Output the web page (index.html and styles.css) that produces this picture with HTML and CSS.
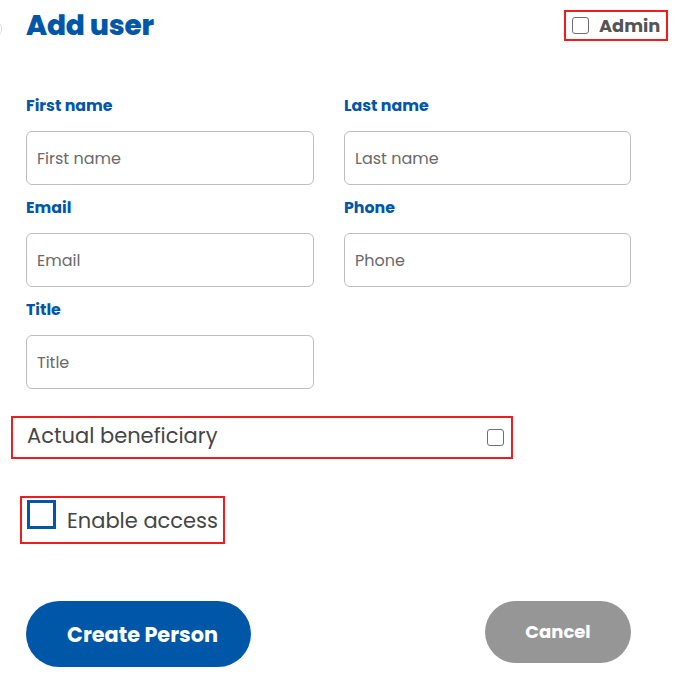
FILE: index.html
```html
<!DOCTYPE html>
<html>
<head>
<meta charset="utf-8">
<link rel="stylesheet" href="styles.css">
</head>
<body>
<div class="page">
  <span class="edge"></span>
  <header class="head">
    <h1 class="title">Add user</h1>
    <label class="admin">
      <span class="cb cb-small"></span>
      <span class="admin-text">Admin</span>
    </label>
  </header>
  <div class="grid">
    <div class="field">
      <div class="label">First name</div>
      <div class="input">First name</div>
    </div>
    <div class="field">
      <div class="label">Last name</div>
      <div class="input">Last name</div>
    </div>
    <div class="field">
      <div class="label">Email</div>
      <div class="input">Email</div>
    </div>
    <div class="field">
      <div class="label">Phone</div>
      <div class="input">Phone</div>
    </div>
    <div class="field">
      <div class="label">Title</div>
      <div class="input">Title</div>
    </div>
  </div>
  <div class="benef">
    <span class="benef-text">Actual beneficiary</span>
    <span class="cb cb-small"></span>
  </div>
  <div class="access">
    <span class="cb-big"></span>
    <span class="access-text">Enable access</span>
  </div>
  <div class="actions">
    <button class="btn btn-primary">Create Person</button>
    <button class="btn btn-cancel">Cancel</button>
  </div>
</div>
</body>
</html>
```
FILE: styles.css
```css
* { box-sizing: border-box; }
html, body { margin: 0; padding: 0; background: #fff; }
body { font-family: "Poppins", "Inter", "Open Sans", sans-serif; color: #444; }
.page { position: relative; width: 675px; height: 682px; overflow: hidden; }
.edge { position: absolute; left: -4px; top: 22px; width: 6px; height: 14px; border-right: 1px solid #ddd; border-radius: 0 6px 6px 0; }
.head { display: flex; justify-content: space-between; align-items: flex-start; padding: 10px 7px 0 26px; height: 95px; }
.title { margin: 0; font-size: 28px; line-height: 32px; font-weight: 800; color: #0057a8; letter-spacing: -0.2px; }
.admin { display: flex; align-items: center; gap: 10px; border: 2px solid #ee1c1c; height: 31px; width: 104px; padding: 0 5px 0 6px; }
.admin-text { font-size: 17.8px; font-weight: 700; color: #555; }
.cb { display: inline-block; border: 1.5px solid #6f6f6f; border-radius: 3px; background: #fff; flex: none; }
.cb-small { width: 17px; height: 17px; }
.grid { display: grid; grid-template-columns: 288px 287px; column-gap: 30px; row-gap: 12px; padding-left: 26px; }
.field { display: flex; flex-direction: column; gap: 14px; }
.label { font-size: 15.8px; line-height: 22px; font-weight: 700; color: #0057a8; }
.input { height: 54px; border: 1px solid #bdbdbd; border-radius: 6px; padding: 0 10px; display: flex; align-items: center; font-size: 16px; color: #6a6a6a; }
.benef { display: flex; align-items: center; justify-content: space-between; margin: 27px 0 0 11px; width: 502px; height: 43px; border: 2px solid #ee1c1c; padding: 0 7px 0 14px; }
.benef-text { font-size: 21px; color: #454545; margin-top: -4px; }
.access { display: inline-flex; align-items: center; gap: 11px; margin: 37px 0 0 20px; height: 48px; border: 2px solid #ee1c1c; padding: 0 5px 0 5px; }
.cb-big { display: inline-block; width: 29px; height: 29px; border: 3px solid #0057a8; margin-top: -12px; flex: none; }
.access-text { font-size: 21px; color: #454545; }
.actions { display: flex; justify-content: space-between; align-items: flex-start; padding: 57px 44px 0 26px; }
.btn { border: none; border-radius: 34px; color: #fff; font-family: inherit; font-weight: 700; }
.btn-primary { width: 225px; height: 66px; background: #0057a8; font-size: 20.8px; padding: 0 0 0 8px; }
.btn-cancel { width: 146px; height: 62px; background: #969696; font-size: 18px; padding: 0 0 1px; }
```
